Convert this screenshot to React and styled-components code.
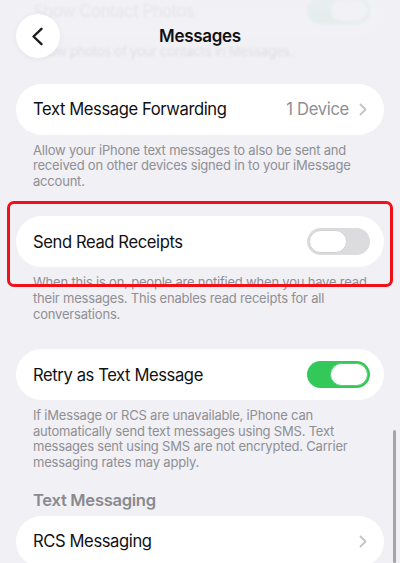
import React from "react";
import styled, { createGlobalStyle } from "styled-components";

const GlobalStyle = createGlobalStyle`
  * { box-sizing: border-box; }
  html, body { margin: 0; padding: 0; }
  body {
    background: #f0f0f5;
    font-family: Inter, "Noto Sans", "Liberation Sans", sans-serif;
    -webkit-font-smoothing: antialiased;
  }
`;

const Chevron = () => (
  <svg width="8" height="13" viewBox="0 0 8 13">
    <polyline
      points="1.5,1.5 6.5,6.5 1.5,11.5"
      fill="none"
      stroke="#c5c5c9"
      strokeWidth="1.8"
      strokeLinecap="round"
      strokeLinejoin="round"
    />
  </svg>
);

const BackArrow = () => (
  <svg width="13" height="19" viewBox="0 0 13 19">
    <polyline
      points="10.5,1.8 2.5,9.5 10.5,17.2"
      fill="none"
      stroke="#1c1c1e"
      strokeWidth="2.4"
      strokeLinecap="round"
      strokeLinejoin="round"
    />
  </svg>
);

const App = () => {
  return (
    <>
      <GlobalStyle />
      <Screen>
        <List>
          {/* scrolled up under the nav bar */}
          <Group $blurred>
            <Card>
              <Label>Show Contact Photos</Label>
              <Toggle $on>
                <Knob $on />
              </Toggle>
            </Card>
            <Footer>Show photos of your contacts in Messages.</Footer>
          </Group>

          <Group>
            <Card>
              <Label>Text Message Forwarding</Label>
              <Detail>
                1 Device
                <Chevron />
              </Detail>
            </Card>
            <Footer>
              Allow your iPhone text messages to also be sent and received on
              other devices signed in to your iMessage account.
            </Footer>
          </Group>

          <Group>
            <Highlight />
            <Card>
              <Label>Send Read Receipts</Label>
              <Toggle>
                <Knob />
              </Toggle>
            </Card>
            <Footer>
              When this is on, people are notified when you have read their
              messages. This enables read receipts for all conversations.
            </Footer>
          </Group>

          <Group>
            <Card>
              <Label>Retry as Text Message</Label>
              <Toggle $on>
                <Knob $on />
              </Toggle>
            </Card>
            <Footer>
              If iMessage or RCS are unavailable, iPhone can automatically send
              text messages using SMS. Text messages sent using SMS are not
              encrypted. Carrier messaging rates may apply.
            </Footer>
          </Group>

          <SectionTitle>Text Messaging</SectionTitle>
          <Card>
            <Label>RCS Messaging</Label>
            <Chevron />
          </Card>
        </List>

        <NavBar>
          <BackButton>
            <BackArrow />
          </BackButton>
          <Title>Messages</Title>
          <NavSpacer />
        </NavBar>

        <ScrollThumb />
      </Screen>
    </>
  );
};

export default App;

const Screen = styled.div`
  position: relative;
  width: 400px;
  height: 563px;
  overflow: hidden;
  background: #f0f0f5;
`;

const List = styled.div`
  display: flex;
  flex-direction: column;
  padding: 0 16px;
  margin-top: -15px;
`;

const Group = styled.div`
  position: relative;
  display: flex;
  flex-direction: column;
  margin-bottom: ${(p) => (p.$blurred ? "24px" : "27px")};
  filter: ${(p) => (p.$blurred ? "blur(1px)" : "none")};
`;

const Card = styled.div`
  display: flex;
  align-items: center;
  justify-content: space-between;
  height: 51px;
  padding: 0 17px;
  background: #ffffff;
  border-radius: 26px;
`;

const Label = styled.div`
  font-size: 16.6px;
  color: #111113;
  letter-spacing: -0.4px;
`;

const Detail = styled.div`
  display: flex;
  align-items: center;
  gap: 10px;
  font-size: 16.6px;
  color: #8e8e93;
  letter-spacing: -0.3px;
`;

const Footer = styled.div`
  padding: 8px 17px 0;
  font-size: 13px;
  line-height: 15.6px;
  color: #8f8f94;
  letter-spacing: -0.2px;
`;

const Toggle = styled.div`
  display: flex;
  align-items: center;
  justify-content: ${(p) => (p.$on ? "flex-end" : "flex-start")};
  width: 63px;
  height: 27px;
  padding: 2px;
  border-radius: 14px;
  background: ${(p) => (p.$on ? "#34c759" : "#dcdcde")};
  margin-right: -3px;
`;

const Knob = styled.div`
  width: 38px;
  height: 23px;
  border-radius: 12px;
  background: #ffffff;
  border: 1px solid ${(p) => (p.$on ? "#4fd070" : "#d2d2d4")};
`;

const Highlight = styled.div`
  position: absolute;
  top: -15px;
  left: -9px;
  right: -9px;
  height: 86px;
  border: 3px solid #f01018;
  border-radius: 7px;
  z-index: 2;
  pointer-events: none;
`;

const SectionTitle = styled.div`
  margin: -9px 0 5px;
  padding: 0 17px;
  font-size: 16.6px;
  font-weight: 600;
  line-height: 22px;
  color: #8a8a8e;
  letter-spacing: -0.3px;
`;

const NavBar = styled.div`
  position: absolute;
  top: 0;
  left: 0;
  right: 0;
  z-index: 5;
  height: 80px;
  display: flex;
  align-items: flex-start;
  justify-content: space-between;
  padding: 14px 16px 0;
  background: linear-gradient(
    to bottom,
    rgba(240, 240, 245, 0.96) 0%,
    rgba(240, 240, 245, 0.92) 40%,
    rgba(240, 240, 245, 0.8) 70%,
    rgba(240, 240, 245, 0) 100%
  );
`;

const BackButton = styled.div`
  display: flex;
  align-items: center;
  justify-content: center;
  width: 44px;
  height: 44px;
  border-radius: 50%;
  background: #ffffff;
  box-shadow: 0 1px 6px rgba(0, 0, 0, 0.05);
  padding-right: 2px;
`;

const Title = styled.div`
  margin-top: 12px;
  font-size: 17px;
  font-weight: 600;
  color: #111113;
  letter-spacing: -0.3px;
`;

const NavSpacer = styled.div`
  width: 44px;
`;

const ScrollThumb = styled.div`
  position: absolute;
  right: 4px;
  top: 430px;
  bottom: 0;
  width: 3px;
  border-radius: 2px;
  background: #a6a6aa;
`;
